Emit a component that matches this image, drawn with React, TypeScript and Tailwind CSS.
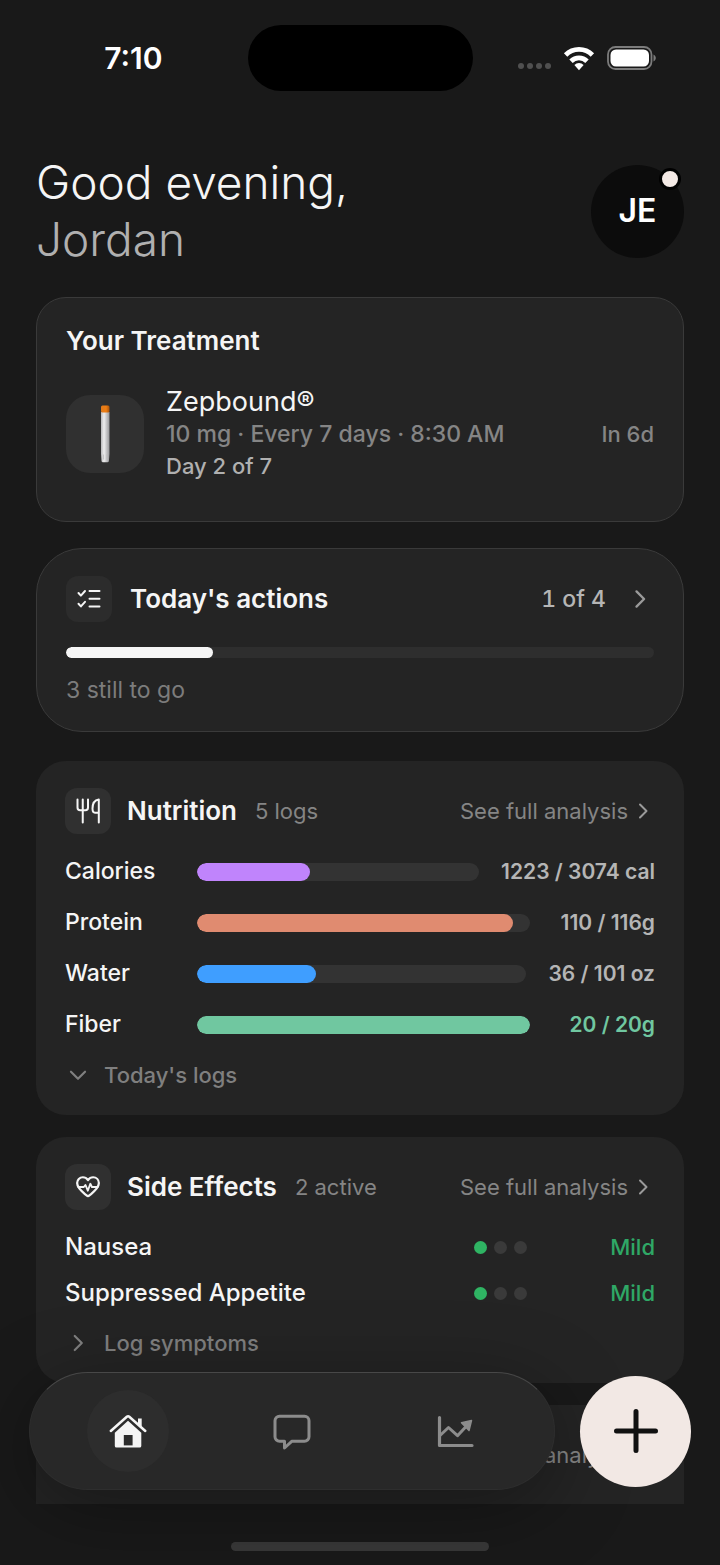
import React from 'react';

interface Nutrient {
  name: string;
  value: string;
  percent: number;
  barClass: string;
  valueClass: string;
}

const NUTRIENTS: Nutrient[] = [
  { name: 'Calories', value: '1223 / 3074 cal', percent: 40, barClass: 'bg-[#c084fc]', valueClass: 'text-[#b5b5b5]' },
  { name: 'Protein', value: '110 / 116g', percent: 95, barClass: 'bg-[#e08b70]', valueClass: 'text-[#b5b5b5]' },
  { name: 'Water', value: '36 / 101 oz', percent: 36, barClass: 'bg-[#3f9eff]', valueClass: 'text-[#b5b5b5]' },
  { name: 'Fiber', value: '20 / 20g', percent: 100, barClass: 'bg-[#70c7a0]', valueClass: 'text-[#70c7a0]' },
];

const SIDE_EFFECTS = [
  { name: 'Nausea', level: 1, label: 'Mild' },
  { name: 'Suppressed Appetite', level: 1, label: 'Mild' },
];

const Chevron: React.FC<{ className?: string }> = ({ className }) => (
  <svg
    className={className}
    viewBox="0 0 24 24"
    fill="none"
    stroke="currentColor"
    strokeWidth="2"
    strokeLinecap="round"
    strokeLinejoin="round"
    aria-hidden="true"
  >
    <path d="M9 5.5l6.5 6.5L9 18.5" />
  </svg>
);

const ChecklistIcon = () => (
  <svg className="w-6 h-6" viewBox="0 0 24 24" fill="none" stroke="currentColor" strokeWidth="2" strokeLinecap="round" strokeLinejoin="round" aria-hidden="true">
    <path d="M1.5 6l2.4 2.6L8 4M1.5 16.8l2.4 2.6L8 14.8" />
    <path d="M12.5 4h10M12.5 11.8h10M12.5 19.6h10" />
  </svg>
);

const UtensilsIcon = () => (
  <svg className="w-[26px] h-[26px]" viewBox="0 0 26 26" fill="none" stroke="currentColor" strokeWidth="2" strokeLinecap="round" strokeLinejoin="round" aria-hidden="true">
    <path d="M2.500 1.500v8c0 1.800 1 2.800 2.600 2.800h5.300c1.600 0 2.600-1 2.600-2.800v-8M7.750 1.500v23" />
    <path d="M23.800 24.500V1.500c-4 .6-6.300 4.200-6.300 9 0 2.800.8 4.200 2.500 4.200h3.800" />
  </svg>
);

const HeartPulseIcon = () => (
  <svg className="w-[26px] h-[26px]" viewBox="0 0 28 28" fill="none" stroke="currentColor" strokeWidth="2.400" strokeLinecap="round" strokeLinejoin="round" aria-hidden="true">
    <path d="M14 6.500C12.500 4.500 10.800 3.500 8.500 3.500 5 3.500 2.300 6.200 2.300 9.800c0 5.700 5.700 9.500 10.200 13.300.9.800 2.100.8 3 0 4.500-3.800 10.200-7.600 10.200-13.300 0-3.600-2.700-6.300-6.200-6.300-2.300 0-4 1-5.500 3z" />
    <path d="M3.500 14h6l1.700-2.200 2.600 6.200 2.700-7.500 1.700 3.500h6.300" strokeWidth="2" />
  </svg>
);

const HomeIcon = () => (
  <svg className="w-10 h-10" viewBox="0 0 40 40" fill="none" aria-hidden="true">
    <path d="M30 7.500h3.700v10l-3.700-3.200z" fill="currentColor" />
    <path d="M2.800 20L18.800 5.800a1.900 1.900 0 0 1 2.500 0L37.300 20" stroke="currentColor" strokeWidth="2.500" strokeLinecap="round" />
    <path d="M20 9.800L33.300 21.700v13.200a1.700 1.700 0 0 1-1.700 1.700H8.500a1.700 1.700 0 0 1-1.700-1.700V21.700z" fill="currentColor" />
    <path d="M15.800 24h8.800v10.400h-8.800z" fill="#2d2d2d" />
  </svg>
);

const ChatIcon = () => (
  <svg className="w-10 h-10" viewBox="0 0 40 40" fill="none" stroke="currentColor" strokeWidth="3" strokeLinejoin="round" aria-hidden="true">
    <path d="M7.500 5.200h25a4.500 4.500 0 0 1 4.500 4.500v16a4.500 4.500 0 0 1-4.500 4.500H20l-7.500 6.800v-6.800h-5a4.500 4.500 0 0 1-4.500-4.500v-16a4.500 4.500 0 0 1 4.500-4.500z" />
  </svg>
);

const ChartIcon = () => (
  <svg className="w-10 h-10" viewBox="0 0 40 40" fill="none" stroke="currentColor" strokeWidth="3.200" strokeLinecap="round" strokeLinejoin="round" aria-hidden="true">
    <path d="M3.500 6.500v28H36" />
    <path d="M4 24.500l8.500-8 9 8.200L31 14.500" strokeWidth="3" />
    <path d="M25.500 11.800l10-2.300-2.500 10z" fill="currentColor" strokeWidth="1.500" />
  </svg>
);

const PenIcon = () => (
  <svg className="w-4 h-[58px]" viewBox="0 0 16 58" aria-hidden="true">
    <defs>
      <linearGradient id="barrel" x1="0" x2="1" y1="0" y2="0">
        <stop offset="0" stopColor="#b9b9bb" />
        <stop offset="0.35" stopColor="#eeeeef" />
        <stop offset="1" stopColor="#98989b" />
      </linearGradient>
      <linearGradient id="cap" x1="0" x2="1" y1="0" y2="0">
        <stop offset="0" stopColor="#e07a1c" />
        <stop offset="0.6" stopColor="#ee7d12" />
        <stop offset="1" stopColor="#a9540c" />
      </linearGradient>
    </defs>
    <path d="M4 7h8.500v42l-.6 7a1.500 1.500 0 0 1-1.500 1.300H6a1.500 1.500 0 0 1-1.500-1.300L4 49z" fill="url(#barrel)" />
    <path d="M6.500 49.500v5M9.800 49.500v5" stroke="#bcbcbe" strokeWidth="0.800" />
    <rect x="4" y="0.500" width="8.500" height="7" rx="1.500" fill="url(#cap)" />
  </svg>
);

const WifiIcon = () => (
  <svg className="w-8 h-[26px]" viewBox="0 0 32 26" fill="none" stroke="currentColor" strokeWidth="4.800" aria-hidden="true">
    <path d="M2.600 10a19 19 0 0 1 26.800 0" />
    <path d="M8 16.200a11.300 11.300 0 0 1 16 0" />
    <path d="M16 25.200l-4.600-5.200a6.500 6.500 0 0 1 9.200 0z" fill="currentColor" stroke="none" />
  </svg>
);

const BatteryIcon = () => (
  <svg className="w-[50px] h-6" viewBox="0 0 50 24" fill="none" aria-hidden="true">
    <rect x="1" y="1" width="43.500" height="22" rx="7.500" stroke="#7c7c7c" strokeWidth="1.800" />
    <rect x="3.500" y="3.500" width="38.500" height="17" rx="5.500" fill="#fff" />
    <path d="M46.500 8.500c1.500.7 2.300 2 2.300 3.500s-.8 2.800-2.300 3.500z" fill="#7c7c7c" />
  </svg>
);

const IconTile: React.FC<{ children: React.ReactNode }> = ({ children }) => (
  <span className="flex w-[46px] h-[46px] shrink-0 items-center justify-center rounded-xl bg-[#303030]">{children}</span>
);

const AnalysisLink = () => (
  <a href="#analysis" className="ml-auto flex items-center gap-[3px] text-[22px] whitespace-nowrap text-[#858585]">
    See full analysis
    <Chevron className="w-6 h-6 text-[#9a9a9a]" />
  </a>
);

const SectionHeader: React.FC<{ icon: React.ReactNode; title: string; note: string }> = ({ icon, title, note }) => (
  <div className="flex items-center">
    <IconTile>{icon}</IconTile>
    <h2 className="ml-4 text-[26px] leading-8 font-semibold">{title}</h2>
    <span className="ml-[18px] text-[22px] text-[#858585]">{note}</span>
    <AnalysisLink />
  </div>
);

const StatusBar = () => (
  <div className="grid h-[116px] grid-cols-[1fr_225px_1fr] items-center">
    <span className="pr-[85px] text-right text-[30px] font-semibold text-white">7:10</span>
    <span className="h-[66px] rounded-full bg-black" />
    <div className="flex items-center justify-end pr-[63px] text-white">
      <span className="mt-4 flex gap-[3px]">
        {[0, 1, 2, 3].map((dot) => (
          <span key={dot} className="h-[6px] w-[6px] rounded-sm bg-[#505050]" />
        ))}
      </span>
      <span className="ml-3"><WifiIcon /></span>
      <span className="ml-3"><BatteryIcon /></span>
    </div>
  </div>
);

const TreatmentCard = () => (
  <section className="mt-[29px] rounded-[30px] border border-[#3a3a3a] bg-[#242424] px-[29px] pt-7 pb-[39px]">
    <h2 className="text-[26px] leading-[30px] font-semibold">Your Treatment</h2>
    <div className="mt-[30px] flex items-center">
      <span className="flex h-[78px] w-[78px] shrink-0 items-center justify-center rounded-3xl bg-[#303030]">
        <PenIcon />
      </span>
      <div className="ml-[22px] leading-8">
        <p className="text-[27px] leading-8">Zepbound®</p>
        <p className="text-[23px] leading-8 font-medium text-[#858585]">10 mg · Every 7 days · 8:30 AM</p>
        <p className="text-[22px] leading-8 font-medium text-[#b0b0b0]">Day 2 of 7</p>
      </div>
      <span className="ml-auto text-[22px] font-medium text-[#858585]">In 6d</span>
    </div>
  </section>
);

const ActionsCard = () => (
  <section className="mt-[26px] rounded-[46px] border border-[#3a3a3a] bg-[#242424] px-[29px] pt-[27px] pb-[26px]">
    <a href="#actions" className="flex items-center">
      <span className="flex w-[46px] h-[46px] items-center justify-center rounded-xl bg-[#2c2c2c]">
        <ChecklistIcon />
      </span>
      <h2 className="ml-[18px] text-[26px] leading-8 font-semibold">Today's actions</h2>
      <span className="ml-auto text-[23px] font-medium text-[#b5b5b5] tabular-nums">1 of 4</span>
      <Chevron className="ml-5 w-7 h-7 text-[#9a9a9a]" />
    </a>
    <div className="mt-[25px] h-[11px] overflow-hidden rounded-full bg-[#2e2e2e]">
      <div className="h-full w-1/4 rounded-full bg-[#f5f5f5]" />
    </div>
    <p className="mt-[17px] text-[23px] leading-[30px] text-[#7c7c7c]">3 still to go</p>
  </section>
);

const NutritionCard = () => (
  <section className="mt-[29px] rounded-[30px] bg-[#242424] px-[29px] pt-[27px] pb-[15px]">
    <SectionHeader icon={<UtensilsIcon />} title="Nutrition" note="5 logs" />
    <ul className="mt-3">
      {NUTRIENTS.map((item) => (
        <li key={item.name} className="flex h-[51px] items-center">
          <span className="w-[132px] shrink-0 text-[23px] font-medium">{item.name}</span>
          <span className="h-[18px] flex-1 overflow-hidden rounded-full bg-[#333333]">
            <span className={`block h-full rounded-full ${item.barClass}`} style={{ width: `${item.percent}%` }} />
          </span>
          <span className={`ml-[22px] min-w-[103px] text-right text-[21px] font-semibold whitespace-nowrap ${item.valueClass}`}>
            {item.value}
          </span>
        </li>
      ))}
    </ul>
    <button type="button" className="flex h-[50px] items-center text-[22px] font-medium text-[#7f7f7f]">
      <Chevron className="mr-[13px] w-[26px] h-[26px] rotate-90" />
      Today's logs
    </button>
  </section>
);

const SideEffectsCard = () => (
  <section className="mt-[22px] rounded-[30px] bg-[#242424] px-[29px] pt-[27px] pb-[13px]">
    <SectionHeader icon={<HeartPulseIcon />} title="Side Effects" note="2 active" />
    <ul className="mt-[14px]">
      {SIDE_EFFECTS.map((effect) => (
        <li key={effect.name} className="flex h-[46px] items-center">
          <span className="text-2xl font-medium">{effect.name}</span>
          <span className="ml-auto flex gap-[7px]">
            {[1, 2, 3].map((step) => (
              <span
                key={step}
                className={`h-[13px] w-[13px] rounded-full ${step <= effect.level ? 'bg-[#2fb463]' : 'bg-[#3a3a3a]'}`}
              />
            ))}
          </span>
          <span className="w-[128px] text-right text-[22px] font-medium text-[#2fa866]">{effect.label}</span>
        </li>
      ))}
    </ul>
    <button type="button" className="flex h-[54px] items-center text-[22px] font-medium text-[#7f7f7f]">
      <Chevron className="mr-[13px] w-[26px] h-[26px]" />
      Log symptoms
    </button>
  </section>
);

const BottomBar = () => (
  <div className="fixed inset-x-0 bottom-0 px-[29px] pb-[14px]">
    <div className="flex items-center gap-[25px]">
      <nav className="grid h-[118px] flex-1 grid-cols-3 items-center justify-items-center rounded-full border border-[#2e2e2e] border-t-[#484848] bg-[#282828] px-4 shadow-[0_16px_80px_rgba(0,0,0,0.35)]">
        <a href="#home" aria-label="Home" className="flex h-[82px] w-[82px] items-center justify-center rounded-full bg-[#2d2d2d] text-[#f5f5f5]">
          <HomeIcon />
        </a>
        <a href="#chat" aria-label="Chat" className="text-[#8c8c8c]">
          <ChatIcon />
        </a>
        <a href="#trends" aria-label="Trends" className="text-[#8c8c8c]">
          <ChartIcon />
        </a>
      </nav>
      <button type="button" aria-label="Add" className="flex h-[111px] w-[111px] items-center justify-center rounded-full bg-[#f2e8e4] text-[#111111]">
        <svg className="w-12 h-12" viewBox="0 0 48 48" stroke="currentColor" strokeWidth="5" strokeLinecap="round" aria-hidden="true">
          <path d="M24 4.500v39M4.500 24h39" />
        </svg>
      </button>
    </div>
    <div className="mx-auto mt-[52px] h-[9px] w-[258px] rounded-full bg-[#383838]" />
  </div>
);

const App: React.FC = () => {
  return (
    <div className="min-h-screen bg-[#191919] font-['Inter',sans-serif] text-[#f5f5f5]">
      <StatusBar />
      <main className="px-9 pt-[38px] pb-[61px]">
        <header className="flex items-center justify-between">
          <h1 className="text-[46px] leading-[57px] font-light">
            Good evening,
            <span className="block text-[#b0b0b0]">Jordan</span>
          </h1>
          <button type="button" className="relative h-[93px] w-[93px] rounded-full bg-[#0c0c0c] text-[32px] font-semibold text-white">
            JE
            <span className="absolute top-[3px] right-[3px] h-[22px] w-[22px] rounded-full border-[3px] border-black bg-[#f2e8e4]" />
          </button>
        </header>
        <TreatmentCard />
        <ActionsCard />
        <NutritionCard />
        <SideEffectsCard />
        <section className="mt-[22px] h-[99px] rounded-t-[30px] bg-[#242424] px-[29px] pt-[27px]">
          <div className="flex h-[46px] items-center">
            <AnalysisLink />
          </div>
        </section>
      </main>
      <BottomBar />
    </div>
  );
};

export default App;
